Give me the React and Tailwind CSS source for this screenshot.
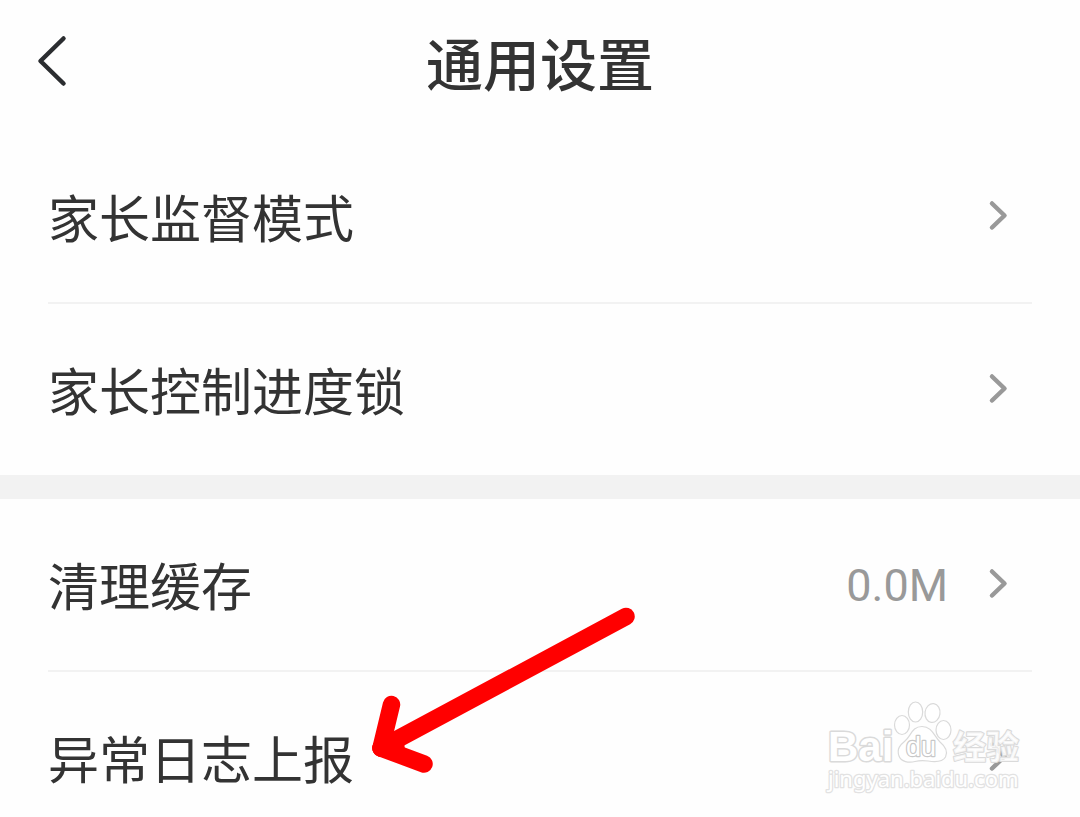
import React from "react";

const groups = [
  [{ label: "家长监督模式" }, { label: "家长控制进度锁" }],
  [{ label: "清理缓存", value: "0.0M" }, { label: "异常日志上报" }],
];

function Chevron() {
  return (
    <svg width="24" height="32" viewBox="0 0 24 32" fill="none" aria-hidden="true">
      <path
        d="M6 3.500 L18.500 15.500 L6 27.500"
        stroke="#999999"
        strokeWidth="4.500"
        strokeLinecap="round"
        strokeLinejoin="round"
      />
    </svg>
  );
}

function Row({ label, value }) {
  return (
    <li>
      <button className="flex h-[171px] w-full items-center pb-0.5 text-left">
        <span className="flex-1 text-[51px] leading-[72px] text-[#333333]">{label}</span>
        {value && (
          <span className="mr-[38px] pt-1 font-['Roboto',sans-serif] text-[45px] leading-[56px] text-[#999999]">
            {value}
          </span>
        )}
        <span className="mr-[22px]">
          <Chevron />
        </span>
      </button>
    </li>
  );
}

function Arrow() {
  return (
    <svg
      className="pointer-events-none absolute top-[600px] left-[364px]"
      width="280"
      height="180"
      viewBox="364 600 280 180"
      fill="none"
      stroke="#ff0000"
      strokeWidth="17.500"
      strokeLinecap="round"
      strokeLinejoin="round"
      aria-hidden="true"
    >
      <path d="M626 616.500 L381 748" />
      <path d="M391.500 704.500 L381 748 L424 764" />
      <path d="M386 738 L381 748 L396 748" />
    </svg>
  );
}

function Watermark() {
  return (
    <svg
      className="pointer-events-none absolute top-[696px] right-[50px]"
      width="210"
      height="104"
      viewBox="820 696 210 104"
      fill="#ffffff"
      stroke="#dadada"
      strokeWidth="1.2"
      strokeLinejoin="round"
    >
      <text
        x="828"
        y="761"
        fontSize="42"
        fontWeight="700"
        fontFamily="Liberation Sans, sans-serif"
        strokeWidth="3"
        paintOrder="stroke"
      >
        Bai
      </text>
      <ellipse cx="902" cy="725" rx="7.500" ry="9.500" />
      <ellipse cx="915.500" cy="712" rx="7.200" ry="10" />
      <ellipse cx="932.500" cy="713" rx="7.500" ry="9.500" transform="rotate(8 932.500 713)" />
      <ellipse cx="943.500" cy="730" rx="7.500" ry="9.500" />
      <path d="M922 726.500 C932 726.500 934 736 940 742 C946 747 948 752 945.500 757 C942 763 934 762 928 761 C924 760.500 919 760.500 915 761.500 C909 763 901 762 899 756 C896.500 749 900 745 905 741 C911 736 912 726.500 922 726.500 Z" />
      <text
        x="906"
        y="756"
        fontSize="27"
        fontFamily="Liberation Sans, sans-serif"
        stroke="#c8c8c8"
        strokeWidth="2.4"
        paintOrder="stroke"
      >
        du
      </text>
      <text
        x="953"
        y="759"
        fontSize="33"
        fontWeight="700"
        fontFamily="Noto Sans CJK SC, sans-serif"
        fillOpacity="0.8"
        strokeWidth="2.2"
        paintOrder="stroke"
      >
        经验
      </text>
      <text
        x="828"
        y="787"
        fontSize="22"
        fontFamily="Noto Sans, sans-serif"
        stroke="#e2e2e2"
        strokeWidth="2.6"
        paintOrder="stroke"
      >
        jingyan.baidu.com
      </text>
    </svg>
  );
}

export default function App() {
  return (
    <div className="relative h-screen overflow-hidden bg-[#fefefe] font-['Noto_Sans_CJK_SC',sans-serif]">
      {/* header */}
      <header className="grid h-[131px] grid-cols-[1fr_auto_1fr] items-center px-8 pb-2.5">
        <button aria-label="返回" className="justify-self-start">
          <svg width="40" height="56" viewBox="32 33 40 56" fill="none" aria-hidden="true">
            <path
              d="M63.500 38.500 L40.500 61 L63.500 83.500"
              stroke="#2b2d30"
              strokeWidth="4.500"
              strokeLinecap="round"
              strokeLinejoin="round"
            />
          </svg>
        </button>
        <h1 className="text-[57px] leading-[80px] font-medium text-[#333333]">通用设置</h1>
      </header>

      {/* settings */}
      <main className="divide-y-24 divide-[#f2f2f2]">
        {groups.map((rows, i) => (
          <section key={i} className="px-12">
            <ul className="divide-y-2 divide-[#f2f2f2]">
              {rows.map((row) => (
                <Row key={row.label} {...row} />
              ))}
            </ul>
          </section>
        ))}
      </main>

      <Arrow />
      <Watermark />
    </div>
  );
}
